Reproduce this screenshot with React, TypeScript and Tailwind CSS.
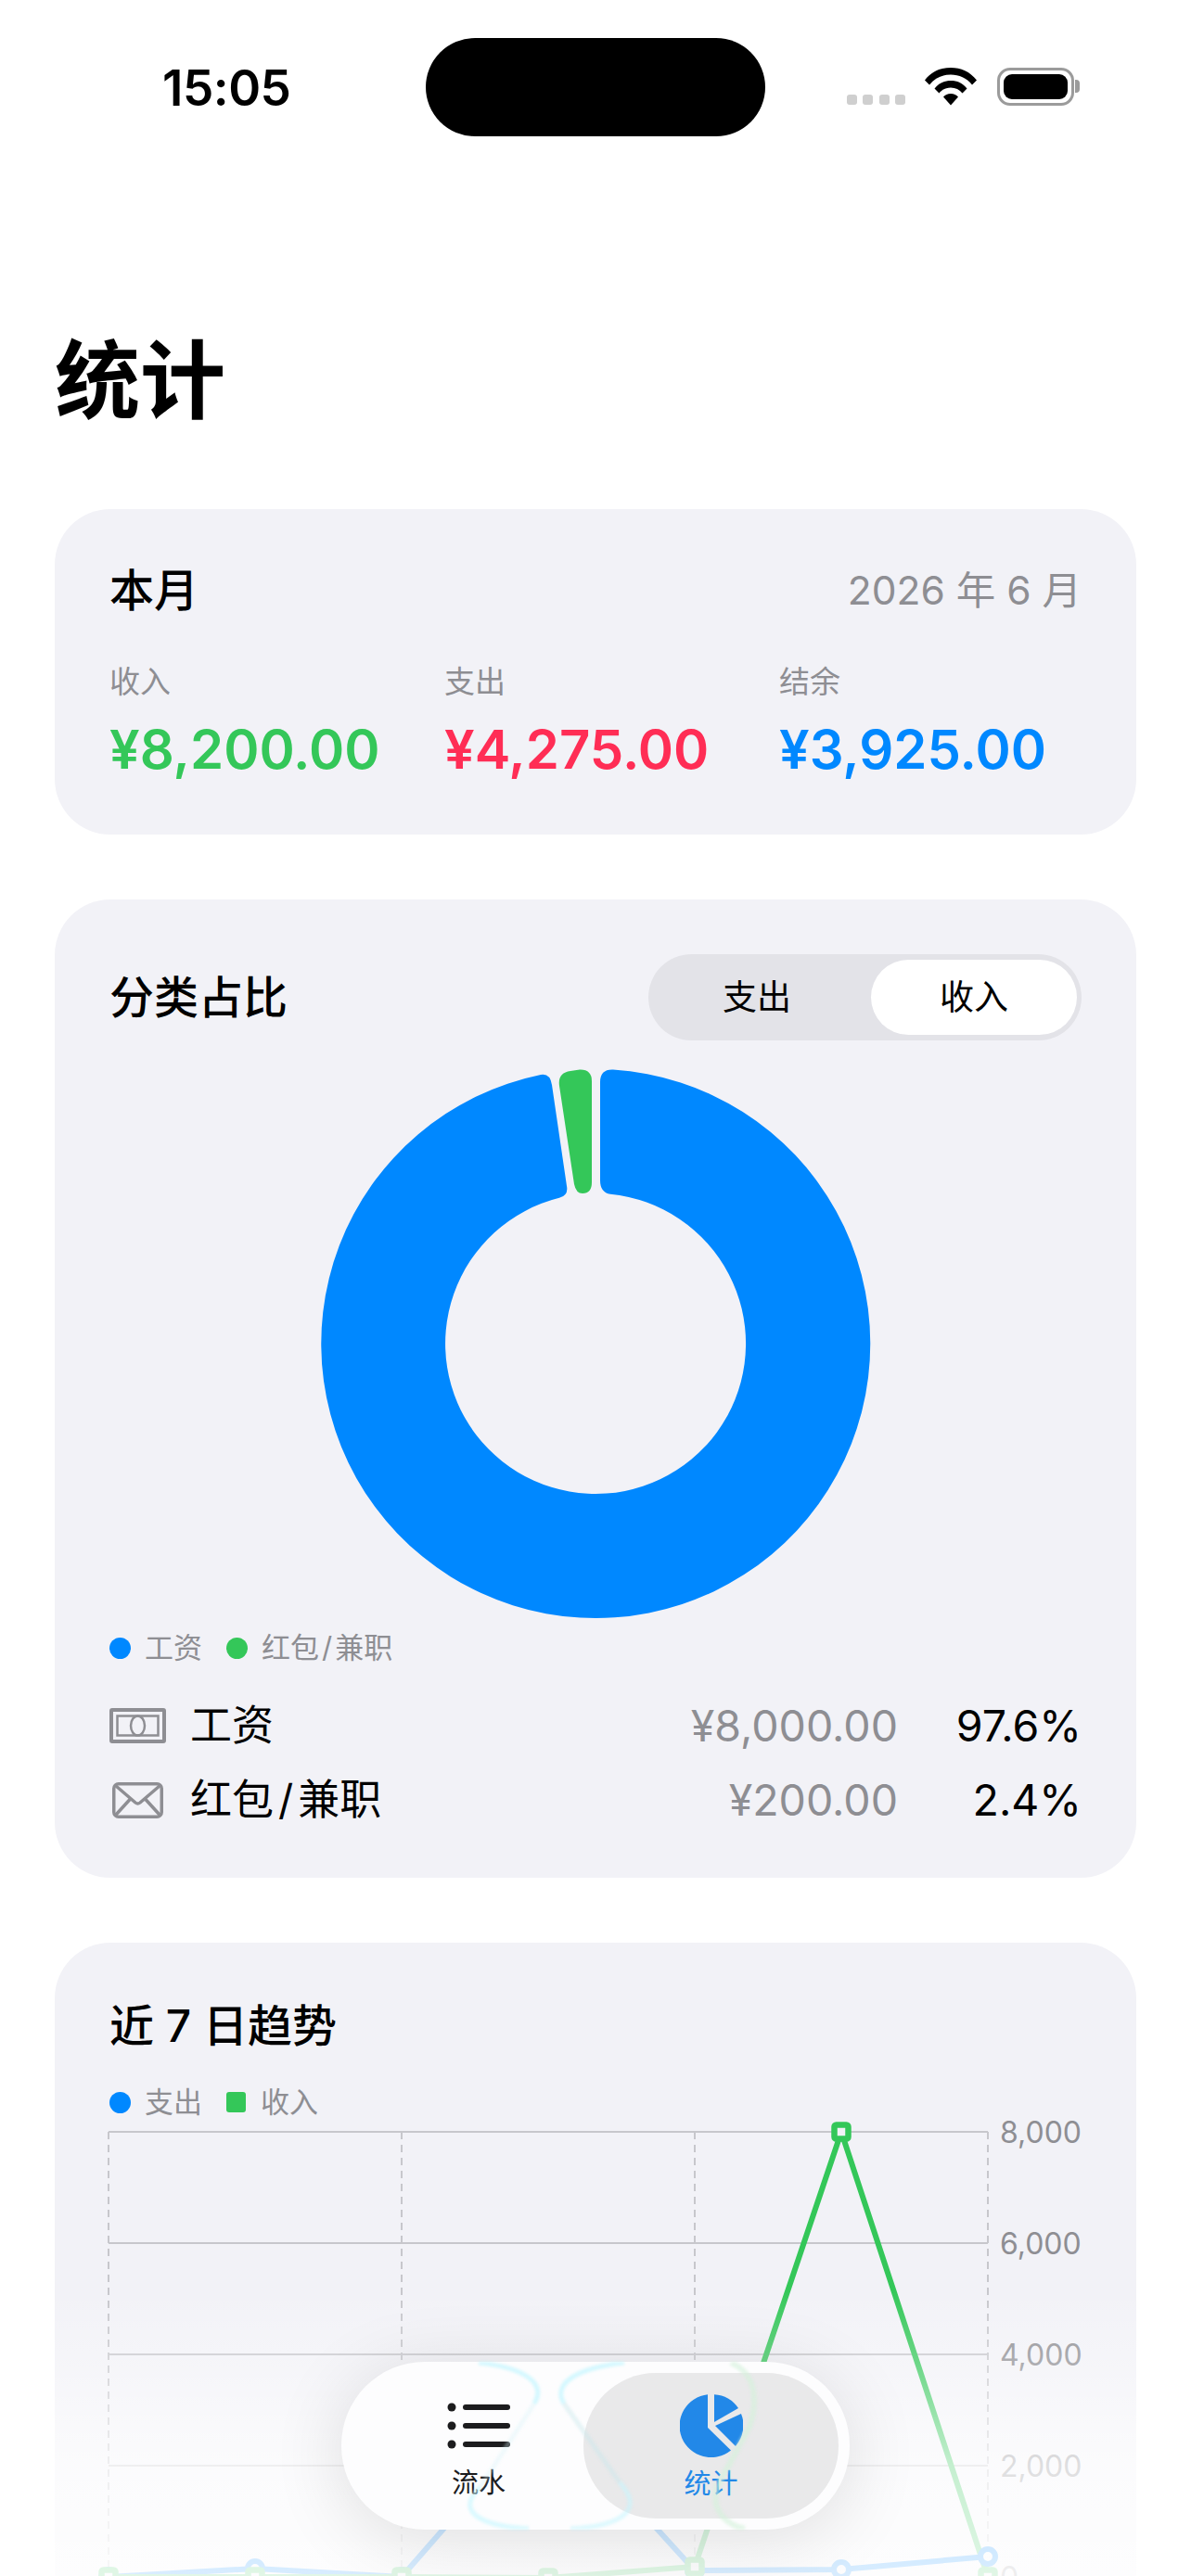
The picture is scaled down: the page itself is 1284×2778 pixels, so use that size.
import React from 'react';

const font = { fontFamily: 'Inter, "Noto Sans CJK SC", sans-serif' };

const Card = ({ className = '', children }: { className?: string; children: React.ReactNode }) => (
  <div className={`rounded-[60px] bg-[#f2f2f7] px-[59px] ${className}`}>{children}</div>
);

const StatusBar = () => (
  <div className="relative flex h-[190px] items-start justify-between">
    <div className="ml-[175px] mt-[66px] text-[53px] leading-[58px] font-semibold tracking-[-0.5px] text-black">15:05</div>
    <div className="absolute left-[459px] top-[41px] h-[106px] w-[366px] rounded-[53px] bg-black" />
    <div className="mr-[126px] mt-[73px] flex items-end">
      <div className="mb-[1px] flex gap-[6.5px]">
        {[0, 1, 2, 3].map((i) => (
          <div key={i} className="h-[11px] w-[11px] rounded-[3px] bg-[#cfcfcf]" />
        ))}
      </div>
      <svg className="ml-[21px] mr-[22px]" width="56" height="41" viewBox="0 0 56 41">
        <path d="M28 0C17 0 7.5 4 0 13.5L5 18.5C11 11 19 7.5 28 7.5S45 11 51 18.5L56 13.5C48.5 4 39 0 28 0Z" fill="#000" />
        <path d="M28 14C21 14 15 16.5 10.5 22.5L15.5 27.5C18.5 23.5 23 21.5 28 21.5S37.5 23.5 40.5 27.5L45.5 22.5C41 16.5 35 14 28 14Z" fill="#000" />
        <path d="M28 28C24.5 28 22 29.3 20 31.5L28 40.5L36 31.5C34 29.3 31.5 28 28 28Z" fill="#000" />
      </svg>
      <div className="relative h-[41px] w-[83px] rounded-[14px] border-[3px] border-[#9b9b9b] p-[4px]">
        <div className="h-full w-full rounded-[9px] bg-black" />
        <div className="absolute right-[-9px] top-[10px] h-[14px] w-[5px] rounded-r-[4px] bg-[#9b9b9b]" />
      </div>
    </div>
  </div>
);

const Stat = ({ label, value, color }: { label: string; value: string; color: string }) => (
  <div>
    <div className="text-[33px] leading-[44px] text-[#8e8e93]">{label}</div>
    <div className={`mt-[15px] text-[58px] leading-[72px] font-semibold ${color}`}>{value}</div>
  </div>
);

const MonthCard = () => (
  <Card className="h-[351px] pt-[58px]">
    <div className="flex items-center justify-between">
      <div className="text-[48px] leading-[60px] font-medium text-black">本月</div>
      <div className="text-[42.5px] leading-[60px] text-[#8e8e93]">2026 年 6 月</div>
    </div>
    <div className="mt-[46px] grid grid-cols-3 gap-x-[35px]">
      <Stat label="收入" value="¥8,200.00" color="text-[#34c759]" />
      <Stat label="支出" value="¥4,275.00" color="text-[#ff2d55]" />
      <Stat label="结余" value="¥3,925.00" color="text-[#0088ff]" />
    </div>
  </Card>
);

const Donut = () => (
  <svg className="mx-auto block" width="596" height="596" viewBox="0 0 596 596">
    <path
      d="M303 16Q303 2 317 2.6A296 296 0 1 1 239 8Q249 6 251 19L267 128Q269 138 259 140.8A162 162 0 1 0 314 136.8Q303 135 303 122Z"
      fill="#0088ff"
    />
    <path d="M259 20Q257 6 271 4Q276 3 281 2.5Q294 2 294 15L294 124Q294 136 284 136Q277 136 275 126Z" fill="#34c759" />
  </svg>
);

const BillIcon = () => (
  <svg width="61" height="38" viewBox="0 0 61 38" fill="none" stroke="#8e8e93">
    <rect x="2" y="2" width="57" height="34" rx="1" strokeWidth="4" />
    <rect x="8.5" y="8.5" width="44" height="21" strokeWidth="2.5" />
    <ellipse cx="30.5" cy="19" rx="7.5" ry="10.5" strokeWidth="2.5" />
  </svg>
);

const MailIcon = () => (
  <svg width="55" height="39" viewBox="0 0 55 39" fill="none" stroke="#8e8e93" strokeWidth="3.5">
    <rect x="1.75" y="1.75" width="51.5" height="35.5" rx="5" />
    <path d="M4 4L25 22Q27.5 24 30 22L51 4M4 35L19.5 18M51 35L35.5 18" />
  </svg>
);

const Row = ({ icon, name, amount, pct }: { icon: React.ReactNode; name: React.ReactNode; amount: string; pct: string }) => (
  <div className="flex h-[80px] items-center">
    <div className="flex w-[61px] justify-center">{icon}</div>
    <div className="ml-[26px] text-[45px] leading-[60px] text-black">{name}</div>
    <div className="ml-auto text-[46.5px] leading-[60px] text-[#8e8e93]">{amount}</div>
    <div className="w-[198px] text-right text-[46.5px] leading-[60px] text-black">{pct}</div>
  </div>
);

const CategoryCard = () => (
  <Card className="h-[1055px] pt-[59px]">
    <div className="flex h-[93px] items-center justify-between">
      <div className="text-[48px] font-medium text-black">分类占比</div>
      <div className="flex h-[93px] w-[467px] rounded-[47px] bg-[#e3e3e8] py-[6px] pr-[5px]">
        <div className="flex flex-1 items-center justify-center pr-[6px] text-[37px] text-black">支出</div>
        <div className="flex w-[222px] items-center justify-center rounded-[41px] bg-white text-[37px] text-black">收入</div>
      </div>
    </div>
    <div className="mt-[29px]">
      <Donut />
    </div>
    <div className="mt-[10px] flex h-[40px] items-center text-[31px] text-[#8e8e93]">
      <div className="h-[23px] w-[23px] rounded-full bg-[#0088ff]" />
      <div className="ml-[15px]">工资</div>
      <div className="ml-[26px] h-[23px] w-[23px] rounded-full bg-[#34c759]" />
      <div className="ml-[15px]">
        红包<span className="mx-[3px]">/</span>兼职
      </div>
    </div>
    <div className="mt-[24px]">
      <Row icon={<BillIcon />} name="工资" amount="¥8,000.00" pct="97.6%" />
      <Row
        icon={<MailIcon />}
        name={
          <>
            红包<span className="mx-[5px]">/</span>兼职
          </>
        }
        amount="¥200.00"
        pct="2.4%"
      />
    </div>
  </Card>
);

// chart coordinates: page position minus the svg's origin (118, 2287)
const xs = [-1, 157, 315, 473, 631, 789, 947];
const expense = [2779, 2770, 2779, 2598, 2772, 2771, 2757].map((y) => y - 2287);
const income = [2779, 2779, 2779, 2780, 2768, 2299, 2779].map((y) => y - 2287);
const gridY = [12, 132, 252, 372, 492];
const axis = ['8,000', '6,000', '4,000', '2,000', '0'];

const TrendChart = () => (
  <svg width="1048" height="500" viewBox="0 0 1048 500" className="block overflow-visible">
    {gridY.map((y) => (
      <line key={y} x1="-1" x2="947" y1={y} y2={y} stroke="#c7c7cc" strokeWidth="2" />
    ))}
    {[-1, 315, 631, 947].map((x) => (
      <line key={x} x1={x} x2={x} y1="12" y2="500" stroke="#c7c7cc" strokeWidth="2" strokeDasharray="8 6" />
    ))}
    <polyline points={xs.map((x, i) => `${x},${expense[i]}`).join(' ')} fill="none" stroke="#0088ff" strokeWidth="6" />
    <polyline points={xs.map((x, i) => `${x},${income[i]}`).join(' ')} fill="none" stroke="#34c759" strokeWidth="6" />
    {xs.map((x, i) => (
      <circle key={i} cx={x} cy={expense[i]} r="8" fill="#f2f2f7" stroke="#0088ff" strokeWidth="6" />
    ))}
    {xs.map((x, i) => (
      <rect key={i} x={x - 7.5} y={income[i] - 7.5} width="15" height="15" rx="2" fill="#f2f2f7" stroke="#34c759" strokeWidth="6.5" />
    ))}
    {axis.map((t, i) => (
      <text key={t} x="960" y={gridY[i] + 12} fontSize="32" fill="#8e8e93">
        {t}
      </text>
    ))}
  </svg>
);

const TrendCard = () => (
  <Card className="h-[900px] pt-[59px]">
    <div className="text-[48px] leading-[62px] font-medium text-black">近 7 日趋势</div>
    <div className="mt-[31px] flex h-[40px] items-center text-[31px] text-[#8e8e93]">
      <div className="h-[23px] w-[23px] rounded-full bg-[#0088ff]" />
      <div className="ml-[15px]">支出</div>
      <div className="ml-[26px] h-[22px] w-[21px] rounded-[3px] bg-[#34c759]" />
      <div className="ml-[16px]">收入</div>
    </div>
    <TrendChart />
  </Card>
);

const TabBar = () => (
  <div className="absolute left-[368px] top-[2547px] flex h-[181px] w-[548px] items-center rounded-[90px] bg-[#fdfdfe] p-[12px] shadow-[0_10px_80px_rgba(0,0,0,0.12)]">
    <div className="relative ml-[101px] flex w-[70px] shrink-0 flex-col items-center">
      <svg width="70" height="66" viewBox="0 0 70 66">
        <circle cx="6" cy="16" r="4.5" fill="#1c1c1e" />
        <circle cx="6" cy="36" r="4.5" fill="#1c1c1e" />
        <circle cx="6" cy="56" r="4.5" fill="#1c1c1e" />
        <rect x="18" y="13" width="51" height="6" rx="3" fill="#1c1c1e" />
        <rect x="18" y="33" width="51" height="6" rx="3" fill="#1c1c1e" />
        <rect x="18" y="53" width="51" height="6" rx="3" fill="#1c1c1e" />
      </svg>
      <div className="mt-[14px] text-[29px] leading-[36px] text-[#1c1c1e]">流水</div>
    </div>
    <div className="relative ml-auto flex h-[157px] w-[275px] shrink-0 flex-col items-center justify-center rounded-[78px] bg-[#e9e9ea] pt-[3px]">
      <svg width="68" height="68" viewBox="0 0 68 68">
        <path d="M30 0.3A34 34 0 1 0 55 60.5L30 36Z" fill="#2288e8" />
        <path d="M37 0.2A34 34 0 0 1 63 15L37 30Z" fill="#2288e8" />
        <path d="M66 21A34 34 0 0 1 60 56L38 34Z" fill="#2288e8" />
      </svg>
      <div className="mt-[11px] text-[29px] leading-[36px] text-[#2288e8]">统计</div>
    </div>
    {/* faint refraction of the chart lines in the glass */}
    <svg className="pointer-events-none absolute inset-0 blur-[1.5px]" width="548" height="181" viewBox="0 0 548 181" fill="none">
      <path d="M148 1C195 6 222 22 208 45" stroke="#c4f6ff" strokeWidth="5" opacity="0.7" />
      <path d="M208 45L150 135" stroke="#d8f4f8" strokeWidth="5" opacity="0.35" />
      <path d="M150 135C118 165 160 178 202 180" stroke="#c4f6ff" strokeWidth="5" opacity="0.6" />
      <path d="M305 1C258 6 226 22 240 45" stroke="#c4f6ff" strokeWidth="5" opacity="0.7" />
      <path d="M240 45L300 130" stroke="#c8e6ea" strokeWidth="5" opacity="0.45" />
      <path d="M300 130C332 165 290 178 247 180" stroke="#c4f6ff" strokeWidth="5" opacity="0.55" />
      <path d="M420 1C446 12 450 40 440 70L405 135C398 160 415 176 435 180" stroke="#d4f2da" strokeWidth="6" opacity="0.6" />
    </svg>
  </div>
);

export default function App() {
  return (
    <div className="relative h-[2778px] w-[1284px] overflow-hidden bg-white" style={font}>
      <StatusBar />
      <div className="px-[59px]">
        <h1 className="mt-[163px] text-[92px] leading-[116px] font-bold text-black">统计</h1>
        <div className="mt-[80px] flex flex-col gap-[70px]">
          <MonthCard />
          <CategoryCard />
          <TrendCard />
        </div>
      </div>
      <div className="pointer-events-none absolute inset-x-0 bottom-0 h-[308px] bg-[linear-gradient(to_bottom,rgba(255,255,255,0)_0%,rgba(255,255,255,0.25)_23%,rgba(255,255,255,0.71)_61%,rgba(255,255,255,0.85)_100%)]" />
      <TabBar />
    </div>
  );
}
